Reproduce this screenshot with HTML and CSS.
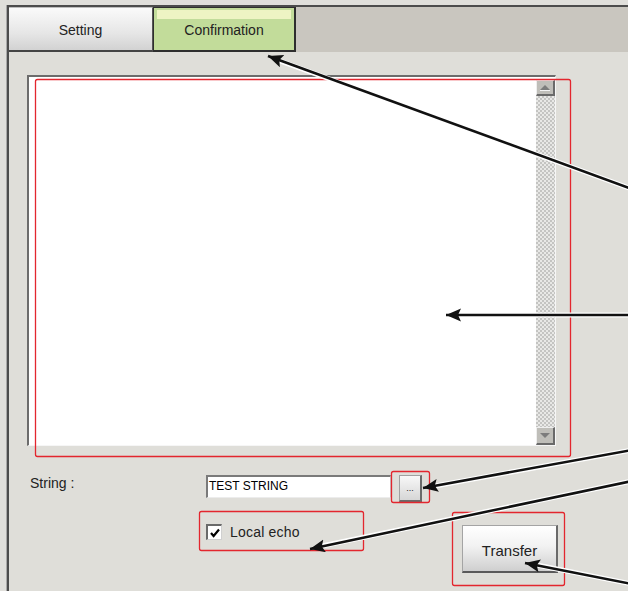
FILE: index.html
```html
<!DOCTYPE html>
<html lang="en">
<head>
    <meta charset="UTF-8">
    <meta name="viewport" content="width=device-width, initial-scale=1.0">
    <title>Confirmation</title>
    <link rel="stylesheet" href="styles.css">
</head>
<body>
    <div class="window">
        <!-- Tab strip -->
        <div class="tabs">
            <div class="tab">Setting</div>
            <div class="tab tab-active">Confirmation</div>
        </div>

        <div class="content">
            <!-- Received text area with scrollbar -->
            <div class="text-frame">
                <div class="text-area"></div>
                <div class="scrollbar">
                    <div class="scroll-btn"><span class="tri-up"></span></div>
                    <div class="scroll-track"></div>
                    <div class="scroll-btn scroll-btn-down"><span class="tri-down"></span></div>
                </div>
            </div>

            <div class="string-row">
                <span class="field-label">String :</span>
                <div class="string-input">TEST STRING</div>
                <button class="dots-btn">...</button>
            </div>

            <div class="bottom-row">
                <label class="echo">
                    <span class="checkbox">
                        <svg width="12" height="12" viewBox="0 0 12 12"><path d="M2 6 L4.6 9 L10 2.5" fill="none" stroke="#000" stroke-width="2.2"/></svg>
                    </span>
                    Local echo
                </label>
                <button class="transfer-btn">Transfer</button>
            </div>
        </div>
    </div>

    <!-- Callout marks drawn over the screen -->
    <svg class="callouts" width="628" height="591" viewBox="0 0 628 591">
        <defs>
            <marker id="head" markerUnits="userSpaceOnUse" markerWidth="16" markerHeight="14" refX="15" refY="6.5" orient="auto-start-reverse">
                <path d="M0 0 L15 6.5 L0 13 L3 6.5 z" fill="#111"/>
            </marker>
        </defs>
        <g fill="none" stroke="#e3262e" stroke-width="1.3">
            <rect x="35.5" y="79.5" width="535" height="377" rx="2"/>
            <rect x="391.5" y="471.5" width="38" height="31" rx="2"/>
            <rect x="199.5" y="511.5" width="164" height="39" rx="2"/>
            <rect x="452.5" y="512.5" width="112" height="73" rx="2"/>
        </g>
        <g stroke="#fff" stroke-width="5">
            <line x1="280" y1="61" x2="632" y2="189"/>
            <line x1="458" y1="315" x2="632" y2="315"/>
            <line x1="435" y1="486" x2="632" y2="450"/>
            <line x1="322" y1="546" x2="632" y2="481"/>
            <line x1="537" y1="565" x2="632" y2="584"/>
        </g>
        <g stroke="#111" stroke-width="2.6">
            <line x1="268" y1="56" x2="632" y2="189" marker-start="url(#head)"/>
            <line x1="446" y1="315" x2="632" y2="315" marker-start="url(#head)"/>
            <line x1="423" y1="488" x2="632" y2="450" marker-start="url(#head)"/>
            <line x1="310" y1="549" x2="632" y2="481" marker-start="url(#head)"/>
            <line x1="525" y1="563" x2="632" y2="584" marker-start="url(#head)"/>
        </g>
    </svg>
</body>
</html>
```

FILE: styles.css
```css
html, body {
    height: 591px;
    overflow: hidden;
}

body {
    margin: 0;
    position: relative;
    background: #e0dfdb;
    font-family: "Liberation Sans", Arial, sans-serif;
    color: #222;
}

.window {
    margin: 5px 0 0 7px;
    height: 586px;
    border-top: 2px solid #4c4c4c;
    border-left: 2px solid #4c4c4c;
    box-shadow: -1px 0 0 #a8a8a8;
    background: #dfded9;
}

/* Tabs */
.tabs {
    display: flex;
    height: 45px;
    background: #c9c6bf;
}

.tab {
    width: 144px;
    box-sizing: border-box;
    border-right: 1px solid #555;
    border-bottom: 2px solid #444;
    border-top: 1px solid #bdbdbd;
    background: linear-gradient(#fafafa, #e6e6e6 60%, #d2d2d2);
    font-size: 14px;
    line-height: 40px;
    text-align: center;
    padding-top: 2px;
}

.tab-active {
    width: 143px;
    border: 1px solid #2e2e2e;
    border-right-width: 2px;
    border-bottom-width: 2px;
    background: linear-gradient(#eef4c3, #eef4c3) no-repeat 3px 2px / calc(100% - 6px) 9px, #c2dc9a;
}

/* Content */
.content {
    padding: 23px 0 0 18px;
    width: 531px;
}

.text-frame {
    display: flex;
    width: 529px;
    height: 371px;
    box-sizing: border-box;
    border-top: 2px solid #6c6c6c;
    border-left: 2px solid #6c6c6c;
    border-right: 1px solid #f6f6f6;
    border-bottom: 1px solid #f6f6f6;
    background: #fff;
}

.text-area {
    flex: 1;
}

.scrollbar {
    width: 19px;
    display: flex;
    flex-direction: column;
    padding-top: 3px;
    background: #fff;
}

.scroll-track {
    flex: 1;
    background: repeating-conic-gradient(#c4c4c2 0 25%, #e8e8e6 0 50%) 0 0 / 4px 4px;
}

.scroll-btn {
    height: 16px;
    box-sizing: border-box;
    border: 1px solid #eeeeee;
    border-right: 2px solid #6a6a6a;
    border-bottom: 2px solid #6a6a6a;
    background: #bfbeb9;
    display: flex;
    align-items: center;
    justify-content: center;
}

.scroll-btn-down {
    height: 18px;
}

.tri-up, .tri-down {
    width: 0;
    height: 0;
    border-left: 5px solid transparent;
    border-right: 5px solid transparent;
}

.tri-up {
    border-bottom: 5px solid #7c7c7c;
    box-shadow: 0 1px 0 #f4f4f4;
}

.tri-down {
    border-top: 5px solid #7c7c7c;
}

/* String row */
.string-row {
    display: flex;
    align-items: flex-start;
    margin-top: 29px;
}

.field-label {
    width: 176px;
    padding-left: 3px;
    font-size: 14px;
    line-height: 16px;
}

.string-input {
    width: 185px;
    height: 23px;
    box-sizing: border-box;
    border-top: 2px solid #7a7a7a;
    border-left: 2px solid #7a7a7a;
    border-right: 1px solid #c8c8c8;
    border-bottom: 1px solid #ececec;
    background: #fff;
    font-size: 12px;
    line-height: 19px;
    padding-left: 1px;
    color: #000;
}

.dots-btn {
    margin-left: 8px;
    width: 23px;
    height: 27px;
    padding: 0;
    box-sizing: border-box;
    border: 1px solid #a0a0a0;
    border-right: 2px solid #6a6a6a;
    border-bottom: 2px solid #6a6a6a;
    background: linear-gradient(#f8f8f8, #d6d6d6);
    font-family: "Liberation Sans", Arial, sans-serif;
    font-size: 9px;
    line-height: 20px;
    color: #222;
}

/* Bottom row */
.bottom-row {
    display: flex;
    align-items: flex-start;
    margin-top: 22px;
    padding-left: 179px;
}

.echo {
    display: flex;
    align-items: center;
    gap: 8px;
    font-size: 14px;
    line-height: 16px;
    letter-spacing: 0.2px;
}

.checkbox {
    width: 16px;
    height: 16px;
    box-sizing: border-box;
    border-top: 2px solid #6a6a6a;
    border-left: 2px solid #6a6a6a;
    border-right: 1px solid #d0d0d0;
    border-bottom: 1px solid #d0d0d0;
    background: #fff;
    display: flex;
    align-items: center;
    justify-content: center;
}

.transfer-btn {
    margin: 1px 0 0 auto;
    width: 96px;
    height: 48px;
    box-sizing: border-box;
    border: 1px solid #a4a4a4;
    border-right: 2px solid #6a6a6a;
    border-bottom: 2px solid #5a5a5a;
    background: linear-gradient(#ffffff, #f2f2f2 45%, #cfcfcf);
    font-family: "Liberation Sans", Arial, sans-serif;
    font-size: 15px;
    color: #222;
    padding: 3px 0 0;
}

/* Callouts */
.callouts {
    position: absolute;
    left: 0;
    top: 0;
    pointer-events: none;
}
```
